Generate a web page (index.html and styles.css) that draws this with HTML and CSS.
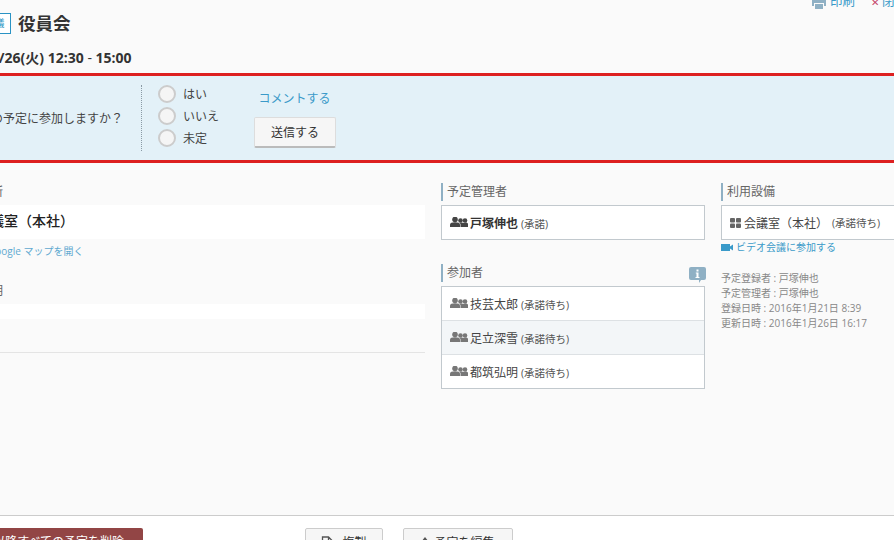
FILE: index.html
```html
<!DOCTYPE html>
<html lang="ja">
<head>
<meta charset="utf-8">
<title>役員会</title>
<link rel="stylesheet" href="styles.css">
</head>
<body>
<div class="page">
  <header class="head">
    <div class="head-actions">
      <a class="act act-print"><svg class="print-icon" viewBox="0 0 16 14" width="16" height="14"><path d="M4 0h8v4H4zM1 5h14v6h-2V8H3v3H1zM4 9h8v5H4z" fill="#8fb0c4"/></svg>印刷</a>
      <a class="act act-close"><span class="x">✕</span>閉じる</a>
    </div>
    <div class="title-row"><span class="tag">会議</span><h1 class="title">役員会</h1></div>
    <div class="date">2016/1/26(火) 12:30 <span class="dash">-</span> 15:00</div>
  </header>

  <section class="rsvp">
    <div class="rsvp-q">この予定に参加しますか？</div>
    <div class="rsvp-radios">
      <label class="radio"><span class="dot"></span>はい</label>
      <label class="radio"><span class="dot"></span>いいえ</label>
      <label class="radio"><span class="dot"></span>未定</label>
    </div>
    <div class="rsvp-send">
      <a class="comment">コメントする</a>
      <button class="send">送信する</button>
    </div>
  </section>

  <main class="cols">
    <div class="col-left">
      <h2 class="lbl">場所</h2>
      <div class="place">会議室（本社）</div>
      <a class="map">Google マップを開く</a>
      <h2 class="lbl lbl-desc">説明</h2>
      <div class="desc"></div>
      <hr class="rule">
    </div>

    <div class="col-mid">
      <h2 class="lbl">予定管理者</h2>
      <ul class="list">
        <li class="row"><svg class="ppl"><use href="#people"/></svg><b class="name">戸塚伸也</b><span class="st">(承諾)</span></li>
      </ul>
      <div class="lbl-row">
        <h2 class="lbl">参加者</h2>
        <svg class="info" viewBox="0 0 17 16" width="17" height="16"><path d="M2 0h13a2 2 0 0 1 2 2v9a2 2 0 0 1-2 2h-3l-2 3v-3H2a2 2 0 0 1-2-2V2a2 2 0 0 1 2-2z" fill="#8fb0c4"/><path d="M7.500 2.500h2v2h-2zM6.800 5.500h2.700v4.500h1v1h-4v-1h1v-3.500h-.700z" fill="#fff"/></svg>
      </div>
      <ul class="list">
        <li class="row"><svg class="ppl ppl-dim"><use href="#people"/></svg><span class="name">技芸太郎</span><span class="st">(承諾待ち)</span></li>
        <li class="row row-alt"><svg class="ppl ppl-dim"><use href="#people"/></svg><span class="name">足立深雪</span><span class="st">(承諾待ち)</span></li>
        <li class="row"><svg class="ppl ppl-dim"><use href="#people"/></svg><span class="name">都筑弘明</span><span class="st">(承諾待ち)</span></li>
      </ul>
    </div>

    <div class="col-right">
      <h2 class="lbl">利用設備</h2>
      <ul class="list">
        <li class="row row-fac"><svg class="grid-ic" viewBox="0 0 11 10" width="11" height="10"><rect width="5" height="4.500" rx="1" fill="#666"/><rect x="6" width="5" height="4.500" rx="1" fill="#666"/><rect y="5.500" width="5" height="4.500" rx="1" fill="#666"/><rect x="6" y="5.500" width="5" height="4.500" rx="1" fill="#666"/></svg><span class="name">会議室（本社）</span><span class="st st-fac">(承諾待ち)</span></li>
      </ul>
      <a class="video"><svg viewBox="0 0 12 7" width="12" height="7"><path d="M0 0h9v7H0zM9 2.500L12 .5v6L9 4.500z" fill="#3a9ac9"/></svg>ビデオ会議に参加する</a>
      <div class="meta">
        <div>予定登録者 : 戸塚伸也</div>
        <div>予定管理者 : 戸塚伸也</div>
        <div>登録日時 : 2016年1月21日 8:39</div>
        <div>更新日時 : 2016年1月26日 16:17</div>
      </div>
    </div>
  </main>

  <footer class="foot">
    <button class="btn btn-del">これ以降すべての予定を削除</button>
    <button class="btn btn-copy"><svg viewBox="0 0 13 14" width="13" height="14"><path d="M1.500 1h6l4 4v8h-10zM7.500 1v4h4" fill="none" stroke="#555" stroke-width="1.300"/></svg>複製</button>
    <button class="btn btn-edit"><svg viewBox="0 0 8 12" width="8" height="12"><path d="M4 1l4 5H0z" fill="#555"/></svg>予定を編集</button>
  </footer>
</div>
<svg class="defs" width="0" height="0"><defs>
  <symbol id="people" viewBox="0 0 18 10"><circle cx="5" cy="2.500" r="2.800"/><path d="M0 10V7.500C0 6 2 5.200 5 5.200s5 .8 5 2.300V10z"/><circle cx="10.500" cy="3.500" r="2.300"/><circle cx="15" cy="3.500" r="2.300"/><path d="M10.500 10V7.500c0-.8-.4-1.200-1-1.600.5-.2 1-.5 1.700-.5.900 0 1.600.2 2.300.5.700-.3 1.400-.5 2.200-.5 1 0 2.300.5 2.300 1.500V10z"/></symbol>
</defs></svg>
</body>
</html>
```
FILE: styles.css
```css
* { box-sizing: border-box; }
html, body { margin: 0; padding: 0; width: 894px; height: 540px; overflow: hidden; background: #fafafa; }
body { font-family: "Open Sans", "Noto Sans CJK JP", sans-serif; color: #333; }
.defs { position: absolute; }
.page { width: 1000px; margin-left: -47px; margin-top: -10px; }

.head { height: 83px; position: relative; padding-top: 22px; }
.head-actions { position: absolute; top: 3px; left: 858px; display: flex; font-size: 12.500px; line-height: 18px; white-space: nowrap; }
.act { display: flex; align-items: center; }
.act-print { color: #3a9ac9; width: 59px; }
.print-icon { margin-right: 3px; }
.act-close { color: #3a9ac9; margin-left: 1px; }
.x { color: #c5476b; margin-right: 3px; font-size: 10px; }
.title-row { display: flex; align-items: center; height: 22px; padding-left: 27px; }
.tag { width: 31px; height: 21px; border: 1px solid #2a93c4; padding-right: 2px; background: #fff; color: #2a93c4; font-size: 10px; line-height: 19px; text-align: center; margin-right: 7px; }
.title { margin: 0; font-size: 17.500px; line-height: 22px; font-weight: 700; color: #333; }
.date { font-size: 14px; font-weight: 700; line-height: 20px; margin-top: 14px; color: #333; }
.dash { font-weight: 400; }

.rsvp { height: 90px; border-top: 3px solid #dd2020; border-bottom: 3px solid #dd2020; background: #e3f1f8; display: flex; margin-right: -100px; }
.rsvp-q { width: 189px; margin-top: 9px; margin-bottom: 9px; padding-left: 26px; padding-top: 1px; border-right: 1px dotted #8a9aa5; font-size: 12px; line-height: 66px; color: #444; white-space: nowrap; height: 66px; }
.rsvp-radios { margin-left: 16px; padding-top: 9px; width: 96px; display: flex; flex-direction: column; gap: 4px; }
.radio { display: flex; align-items: center; height: 18px; font-size: 12px; color: #444; }
.dot { width: 18px; height: 18px; border-radius: 50%; background: #f5f5f5; border: 2px solid #ccc; margin-right: 7px; }
.rsvp-send { width: 82px; display: flex; flex-direction: column; align-items: center; padding-top: 14px; }
.comment { font-size: 12px; line-height: 18px; color: #3a9ac9; margin-right: 1px; }
.send { margin-top: 9px; width: 82px; height: 31px; border: 1px solid #ddd; border-bottom: 2px solid #bbb; border-radius: 2px; background: #f6f6f6; color: #333; font: 12px "Open Sans", "Noto Sans CJK JP", sans-serif; padding: 0; }

.cols { display: grid; grid-template-columns: 472px 264px 200px; column-gap: 16px; height: 352px; padding-top: 20px; }
.col-left { padding-left: 20px; }
.lbl { margin: 0; height: 18px; border-left: 2px solid #8fb0c4; padding-left: 4px; font-size: 12px; line-height: 18px; font-weight: 400; color: #666; white-space: nowrap; }
.lbl-desc { margin-top: 23px; }
.place { margin-top: 4px; height: 34px; background: #fff; padding-left: 3px; font-size: 14px; line-height: 32px; color: #222; font-weight: 500; }
.map { display: block; font-size: 10px; line-height: 16px; margin-top: 4px; padding-left: 15px; color: #5fa9d0; }
.desc { margin-top: 4px; height: 15px; background: #fff; }
.rule { margin: 33px 0 0; border: 0; border-top: 1px solid #e4e4e4; }

.list { list-style: none; margin: 4px 0 0; padding: 0; border: 1px solid #c2c9ce; background: #fff; }
.row { height: 34px; display: flex; align-items: center; padding: 1px 0 0 8px; border-top: 1px solid #dde1e4; font-size: 12px; white-space: nowrap; }
.row:first-child { border-top: 0; height: 33px; }
.row-alt { background: #f3f6f8; }
.ppl { width: 18px; height: 10px; fill: #444; margin-right: 2px; margin-top: -2px; }
.ppl-dim { fill: #777; }
.name { color: #444; }
b.name { font-weight: 700; color: #333; }
.st { font-size: 10.500px; color: #555; margin-left: 3px; }
.lbl-row { display: flex; justify-content: space-between; align-items: flex-end; margin-top: 24px; height: 18px; }
.info { margin-right: -1px; margin-bottom: -1px; }
.row-fac { padding-top: 0; }
.row-fac .name { margin-left: 3px; }
.st-fac { margin-left: 4px; }
.grid-ic { flex: none; }
.video { display: flex; align-items: center; gap: 3px; font-size: 10px; line-height: 14px; margin-top: 0; color: #3a9ac9; }
.meta { margin-top: 17px; font-size: 10px; line-height: 15px; color: #888; white-space: nowrap; }

.foot { border-top: 1px solid #ccc; background: #fff; height: 60px; margin-right: -100px; padding-top: 12px; display: flex; align-items: flex-start; }
.btn { height: 34px; border-radius: 2px; font: 12px/16px "Open Sans", "Noto Sans CJK JP", sans-serif; padding: 6px 0 0; display: flex; align-items: flex-start; justify-content: center; gap: 8px; white-space: nowrap; }
.btn svg { margin-top: 1px; }
.btn-del { width: 190px; background: #924545; color: #fff; border: 0; justify-content: flex-end; padding-right: 19px; }
.btn-copy { margin-left: 162px; width: 78px; background: #f6f6f6; color: #333; border: 1px solid #ccc; }
.btn-edit { margin-left: 20px; width: 110px; background: #f6f6f6; color: #333; border: 1px solid #ccc; gap: 5px; }
```
